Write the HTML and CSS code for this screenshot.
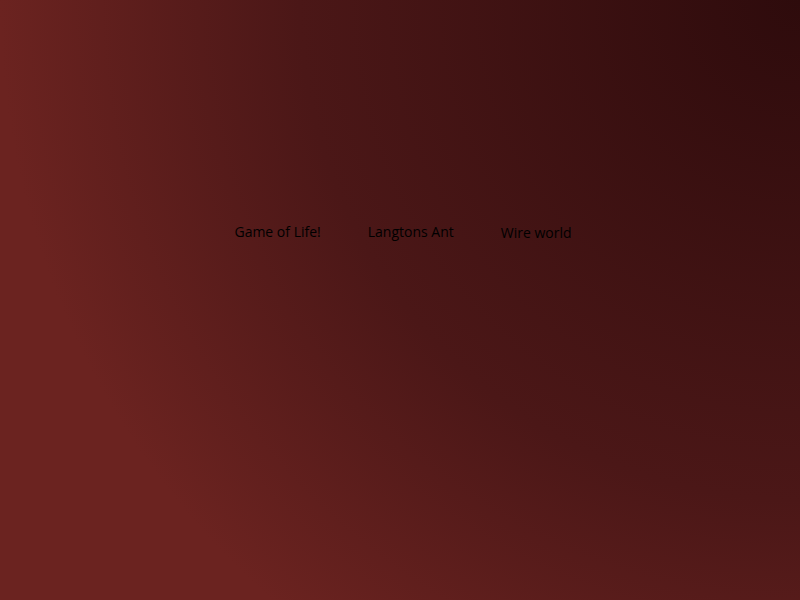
FILE: index.html
```html
<!DOCTYPE html>
<html>
<head>
<meta charset="utf-8">
<link rel="stylesheet" href="styles.css">
</head>
<body>
<main class="page">
  <nav class="menu">
    <a class="item">Game of Life!</a>
    <a class="item">Langtons Ant</a>
    <a class="item item-wire">Wire world</a>
  </nav>
</main>
</body>
</html>
```
FILE: styles.css
```css
html, body {
  margin: 0;
  height: 100%;
}
body {
  background: radial-gradient(circle at top right, #2e0b0c 0%, #4b1717 50%, #6b2320 80%, #6b2320 100%);
  font-family: "Open Sans", "Noto Sans", sans-serif;
}
.page {
  display: flex;
  justify-content: center;
  padding-top: 222px;
  padding-left: 6px;
}
.menu {
  display: flex;
  gap: 47px;
  align-items: flex-start;
}
.item {
  color: #000;
  font-size: 14px;
  line-height: 20px;
  cursor: pointer;
}
.item-wire {
  margin-top: 1px;
}
```
